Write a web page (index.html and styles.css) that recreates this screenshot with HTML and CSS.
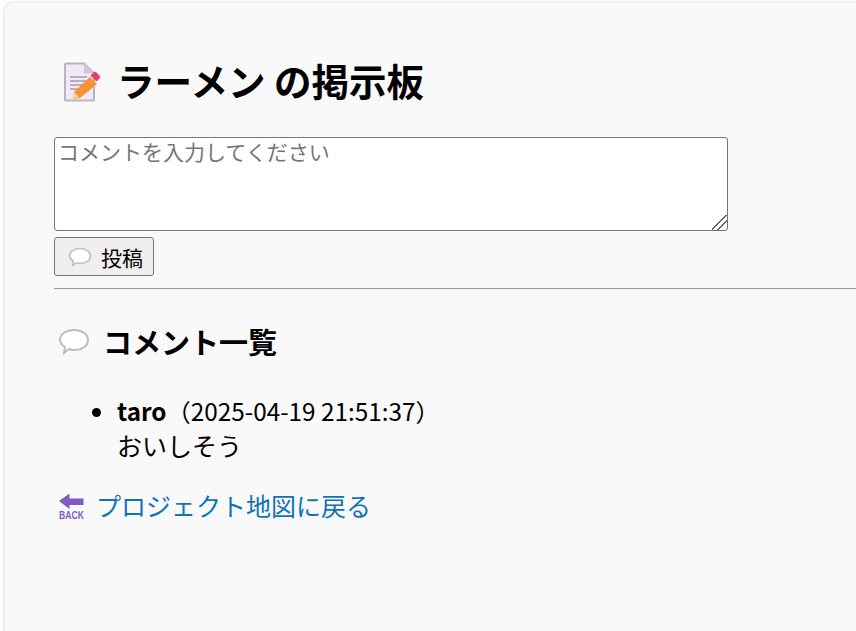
FILE: index.html
```html
<!DOCTYPE html>
<html lang="ja">
<head>
    <meta charset="UTF-8">
    <meta name="viewport" content="width=device-width, initial-scale=1.0">
    <title>ラーメン の掲示板</title>
    <link rel="stylesheet" href="styles.css">
</head>
<body>
    <div class="board">
        <h1 class="board-title">
            <svg class="memo-icon" width="40" height="40" viewBox="0 0 40 40">
                <path d="M4 1.5h18l10 10v26a1 1 0 0 1-1 1H4a1 1 0 0 1-1-1v-35a1 1 0 0 1 1-1z" fill="#f1e9f8" stroke="#b9b3c1" stroke-width="2"/>
                <path d="M22 1.5v10h10z" fill="#cfc9d6"/>
                <path d="M8 15h17M8 19h17M8 23h13M8 27h8" stroke="#a09ca8" stroke-width="1.5"/>
                <path d="M28 15l7 7-17 14-7 1 1-7z" fill="#fb9231"/>
                <path d="M11 37l1-7 5 5z" fill="#f6d9a0"/>
                <path d="M28.500 13.500l3-3a2 2 0 0 1 3 0l3 3a2 2 0 0 1 0 3l-3 3z" fill="#ee3c68"/>
            </svg>
            <span>ラーメン の掲示板</span>
        </h1>

        <form class="comment-form">
            <textarea class="comment-input" placeholder="コメントを入力してください"></textarea>
            <button type="button" class="post-btn">
                <svg class="bubble-icon" width="24" height="20" viewBox="0 0 32 27">
                    <path d="M16 2c8 0 14 4 14 10s-6 10-14 10c-2 0-3 0-5-1l-5 4 1-6c-3-2-5-4-5-7C2 6 8 2 16 2z" fill="#fff" stroke="#bdbdbd" stroke-width="2"/>
                </svg>
                投稿
            </button>
        </form>

        <hr class="divider">

        <h2 class="comments-title">
            <svg class="bubble-icon" width="32" height="27" viewBox="0 0 32 27">
                <path d="M16 2c8 0 14 4 14 10s-6 10-14 10c-2 0-3 0-5-1l-5 4 1-6c-3-2-5-4-5-7C2 6 8 2 16 2z" fill="#fff" stroke="#bdbdbd" stroke-width="2"/>
            </svg>
            <span>コメント一覧</span>
        </h2>

        <ul class="comment-list">
            <li><strong>taro</strong>（2025-04-19 21:51:37）<br><span class="comment-body">おいしそう</span></li>
        </ul>

        <a class="back-link" href="#">
            <svg class="back-icon" width="33" height="34" viewBox="0 0 33 34">
                <path d="M1 13l10.500-7.500v5h14v6.500h-14v4z" fill="#7d5cc6"/>
                <text x="1" y="31" textLength="25" lengthAdjust="spacingAndGlyphs" class="back-text">BACK</text>
            </svg>
            プロジェクト地図に戻る
        </a>
    </div>
</body>
</html>
```

FILE: styles.css
```css
* {
    box-sizing: border-box;
}

body {
    margin: 0;
    background: #fff;
    font-family: "Noto Sans CJK JP", "Noto Sans", sans-serif;
    color: #000;
}

.board {
    margin: 1px 0 0 3px;
    height: 630px;
    padding: 52px 0 0 49px;
    background: #f9f9f9;
    border: 2px solid #efefef;
    border-right: none;
    border-bottom: none;
    border-top-left-radius: 10px;
}

.board-title {
    display: flex;
    align-items: center;
    gap: 15px;
    margin: 0 0 32px 8px;
    font-size: 37.500px;
    line-height: 50px;
    font-weight: 700;
}

.memo-icon {
    margin-top: 3px;
}

.comment-form {
    display: flex;
    flex-direction: column;
    align-items: flex-start;
    gap: 6px;
}

.comment-input {
    display: block;
    width: 674px;
    height: 94px;
    padding: 0 3px;
    background: #fff;
    border: 1px solid #767676;
    border-radius: 3px;
    font-family: inherit;
    font-size: 21px;
    line-height: 26px;
}

.comment-input::placeholder {
    color: #757575;
}

.comment-input::-webkit-resizer {
    background: linear-gradient(135deg, transparent 44%, #666 44%, #666 51%, transparent 51%, transparent 66%, #666 66%, #666 73%, transparent 73%);
}

.post-btn {
    display: flex;
    align-items: center;
    gap: 9px;
    width: 100px;
    height: 39px;
    padding: 0 0 0 13px;
    background: #efefef;
    border: 1px solid #767676;
    border-radius: 3px;
    font-family: inherit;
    font-size: 21px;
    color: #000;
}

.divider {
    margin: 12px 0 0;
    border: none;
    border-top: 1px solid #999;
}

.comments-title {
    display: flex;
    align-items: center;
    gap: 13px;
    margin: 29px 0 0 4px;
    font-size: 29px;
    line-height: 46px;
    font-weight: 700;
}

.comment-list {
    margin: 30px 0 0;
    padding-left: 63px;
    font-size: 24.300px;
    line-height: 34px;
}

.comment-body {
    font-size: 25px;
}

.back-link {
    display: flex;
    align-items: center;
    gap: 5px;
    margin: 24px 0 0 4px;
    font-size: 25px;
    line-height: 36px;
    color: #0f73b6;
    text-decoration: none;
}

.back-text {
    font-family: "Liberation Sans", sans-serif;
    font-size: 10.500px;
    font-weight: 700;
    fill: #7d5cc6;
}
```
